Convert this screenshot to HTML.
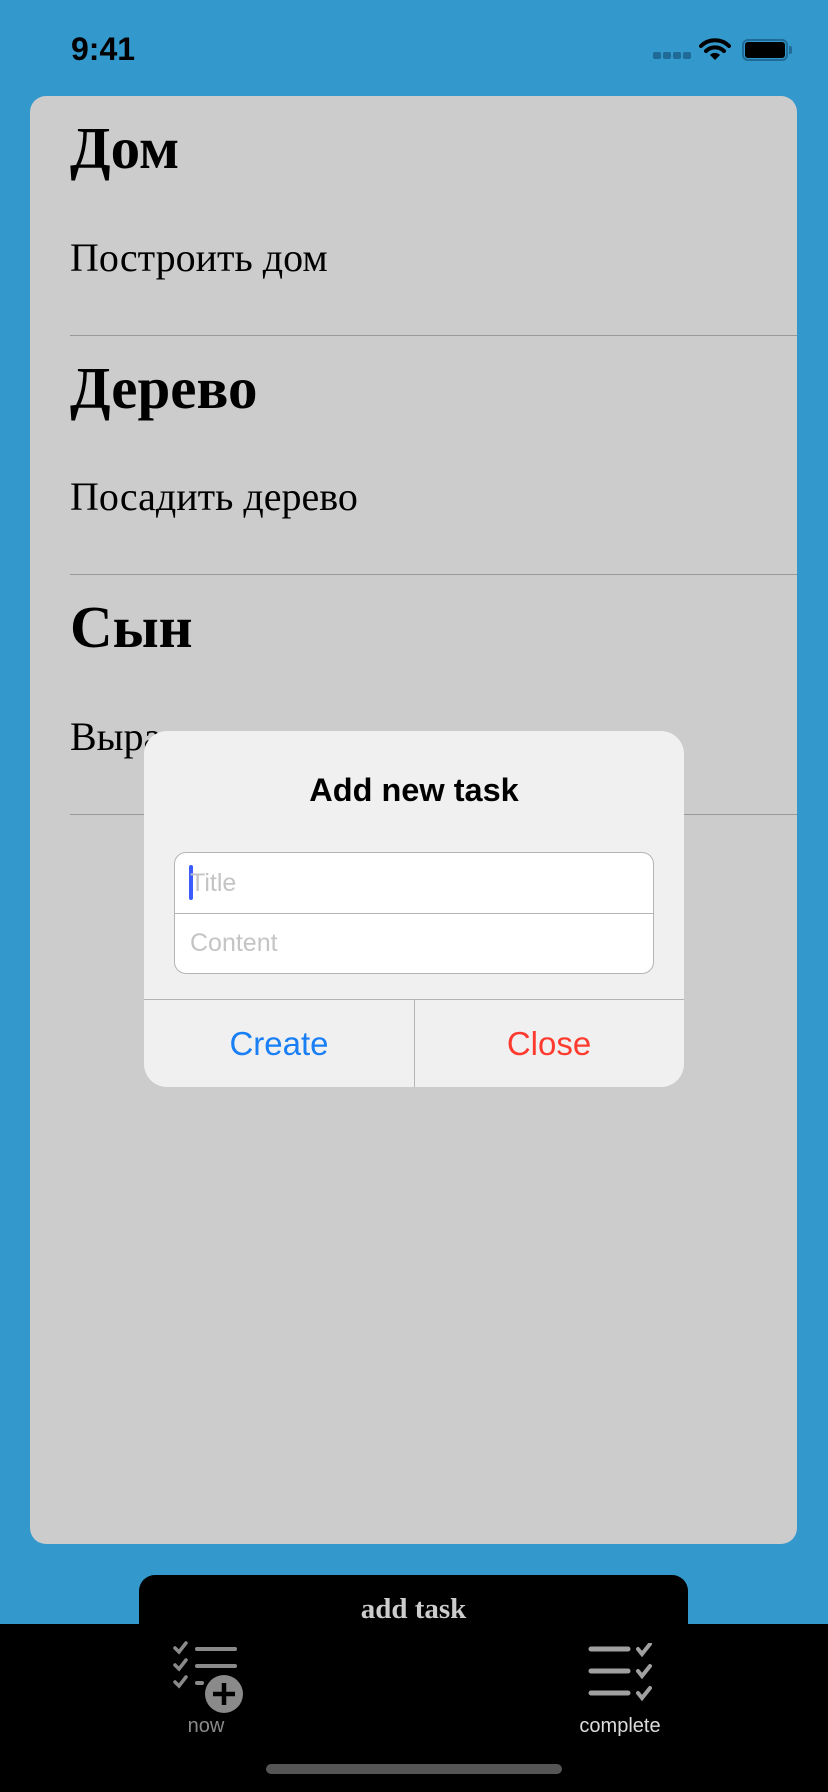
<!DOCTYPE html>
<html><head><meta charset="utf-8"><style>
*{margin:0;padding:0;box-sizing:border-box}
body{width:828px;height:1792px;background:#3398cc;position:relative;overflow:hidden;font-family:"Liberation Sans",sans-serif}
.abs{position:absolute}
.card{left:30px;top:96px;width:767px;height:1448px;background:#cccccc;border-radius:16px}
.h{position:absolute;left:70px;font-family:"Liberation Serif",serif;font-weight:bold;font-size:59px;color:#000;line-height:1}
.s{position:absolute;left:70px;font-family:"Liberation Serif",serif;font-size:40px;color:#000;line-height:1}
.div{position:absolute;left:70px;width:727px;height:1px;background:#999}
.dlg{left:144px;top:731px;width:540px;height:356px;background:#f0f0f0;border-radius:23px;overflow:hidden}
</style></head><body>
<div class="abs" style="left:71px;top:31px;font-size:32px;font-weight:bold;color:#000">9:41</div>
<div class="abs" style="left:653px;top:52px;width:8px;height:7px;background:#1f6a96;border-radius:2px"></div>
<div class="abs" style="left:663px;top:52px;width:8px;height:7px;background:#1f6a96;border-radius:2px"></div>
<div class="abs" style="left:673px;top:52px;width:8px;height:7px;background:#1f6a96;border-radius:2px"></div>
<div class="abs" style="left:683px;top:52px;width:8px;height:7px;background:#1f6a96;border-radius:2px"></div>
<svg class="abs" style="left:699px;top:37px" width="32" height="24" viewBox="0 0 32 24"><path d="M2 9 A20 20 0 0 1 30 9" stroke="#000" stroke-width="4" fill="none" stroke-linecap="round"/><path d="M7 14 A13 13 0 0 1 25 14" stroke="#000" stroke-width="4" fill="none" stroke-linecap="round"/><path d="M16 23 L11 18 A7 7 0 0 1 21 18 Z" fill="#000"/></svg>
<div class="abs" style="left:742px;top:39px;width:46px;height:22px;border:2px solid #1f6a96;border-radius:6px"></div>
<div class="abs" style="left:745px;top:42px;width:40px;height:16px;background:#000;border-radius:3px"></div>
<div class="abs" style="left:789px;top:46px;width:3px;height:8px;background:#1f6a96;border-radius:0 2px 2px 0"></div>

<div class="abs card"></div>
<div class="h" style="top:119px">Дом</div>
<div class="s" style="top:238px">Построить дом</div>
<div class="div" style="top:335px"></div>
<div class="h" style="top:359px">Дерево</div>
<div class="s" style="top:477px">Посадить дерево</div>
<div class="div" style="top:574px"></div>
<div class="h" style="top:598px">Сын</div>
<div class="s" style="top:717px">Вырастить сына</div>
<div class="div" style="top:814px"></div>

<div class="abs dlg">
 <div class="abs" style="left:0;width:540px;top:41px;text-align:center;font-size:32.5px;font-weight:bold;color:#000">Add new task</div>
 <div class="abs" style="left:30px;top:121px;width:480px;height:122px;background:#fff;border:1px solid #b4b4b4;border-radius:12px"></div>
 <div class="abs" style="left:30px;top:182px;width:480px;height:1px;background:#b4b4b4"></div>
 <div class="abs" style="left:45px;top:134px;width:4px;height:35px;background:#3b5bff;border-radius:2px"></div>
 <div class="abs" style="left:46px;top:138px;font-size:25px;color:#c4c4c4">Title</div>
 <div class="abs" style="left:46px;top:198px;font-size:25px;color:#c4c4c4">Content</div>
 <div class="abs" style="left:0;top:268px;width:540px;height:1px;background:#b4b4b4"></div>
 <div class="abs" style="left:270px;top:268px;width:1px;height:88px;background:#b4b4b4"></div>
 <div class="abs" style="left:0;width:270px;top:294px;text-align:center;font-size:33px;color:#1a7ff5">Create</div>
 <div class="abs" style="left:270px;width:270px;top:294px;text-align:center;font-size:33px;color:#ff3b30">Close</div>
</div>

<div class="abs" style="left:139px;top:1575px;width:549px;height:80px;background:#000;border-radius:16px 16px 0 0"></div>
<div class="abs" style="left:0;top:1624px;width:828px;height:168px;background:#000"></div>
<div class="abs" style="left:139px;width:549px;top:1593px;text-align:center;font-family:'Liberation Serif',serif;font-weight:bold;font-size:29px;color:#cccccc">add task</div>

<svg class="abs" style="left:172px;top:1640px" width="76" height="76" viewBox="0 0 76 76">
<g stroke="#8a8a8a" stroke-width="3.5" fill="none" stroke-linecap="round">
<path d="M3 8 l4 4 l7 -9"/><path d="M3 25 l4 4 l7 -9"/><path d="M3 42 l4 4 l7 -9"/>
<path d="M25 9 h38" stroke-width="4"/><path d="M25 26 h38" stroke-width="4"/><path d="M25 43 h5" stroke-width="4"/>
</g>
<circle cx="52" cy="54" r="19" fill="#8a8a8a"/>
<path d="M52 43 v22 M41 54 h22" stroke="#000" stroke-width="4.5"/>
</svg>
<div class="abs" style="left:156px;width:100px;top:1715px;text-align:center;font-size:20px;color:#8a8a8a">now</div>

<svg class="abs" style="left:588px;top:1643px" width="70" height="60" viewBox="0 0 70 60">
<g stroke="#a0a0a0" stroke-width="5" stroke-linecap="round" fill="none">
<path d="M3 6 h37"/><path d="M3 28 h37"/><path d="M3 50 h37"/>
<path d="M50 6 l4 5 l8 -10" stroke-width="4"/><path d="M50 28 l4 5 l8 -10" stroke-width="4"/><path d="M50 50 l4 5 l8 -10" stroke-width="4"/>
</g></svg>
<div class="abs" style="left:560px;width:120px;top:1715px;text-align:center;font-size:20px;color:#dddddd">complete</div>

<div class="abs" style="left:266px;top:1764px;width:296px;height:10px;background:#555;border-radius:5px"></div>
</body></html>
